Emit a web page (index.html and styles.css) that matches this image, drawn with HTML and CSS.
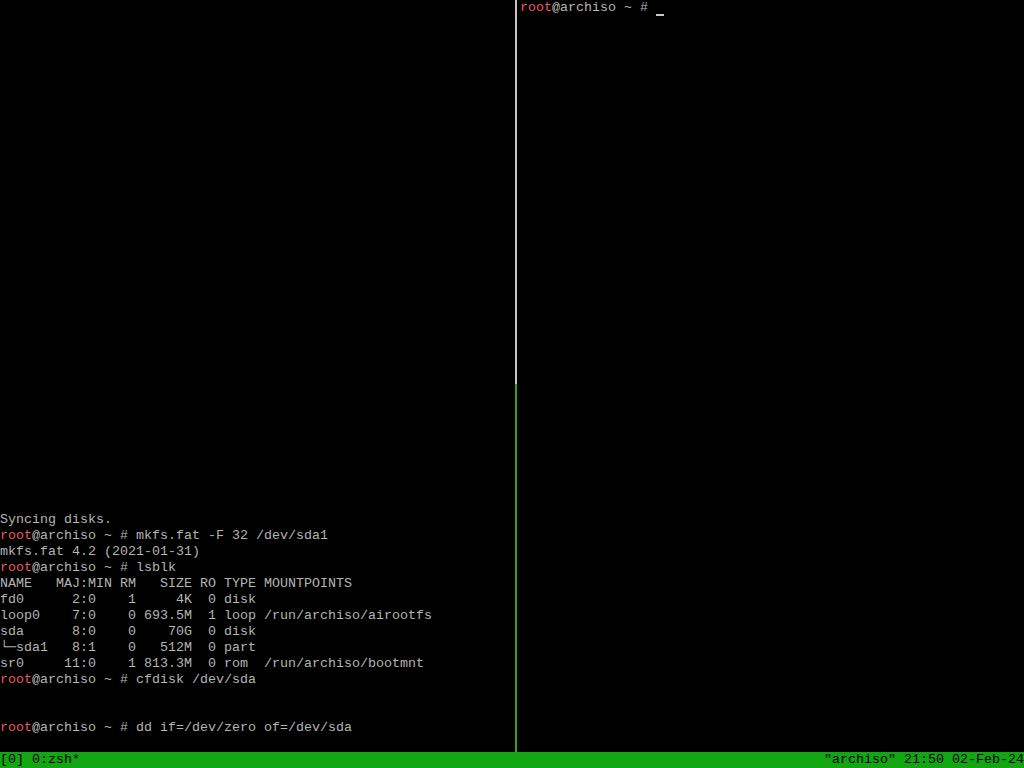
FILE: index.html
```html
<!DOCTYPE html>
<html lang="en">
<head>
    <meta charset="UTF-8">
    <title>tmux - archiso</title>
    <link rel="stylesheet" href="styles.css">
</head>
<body>
<div class="screen">
    <div class="panes">
        <div class="pane pane_left">
            <div class="line">Syncing disks.</div>
            <div class="line"><span class="user">root</span>@archiso ~ # mkfs.fat -F 32 /dev/sda1</div>
            <div class="line">mkfs.fat 4.2 (2021-01-31)</div>
            <div class="line"><span class="user">root</span>@archiso ~ # lsblk</div>
            <div class="line">NAME   MAJ:MIN RM   SIZE RO TYPE MOUNTPOINTS</div>
            <div class="line">fd0      2:0    1     4K  0 disk</div>
            <div class="line">loop0    7:0    0 693.5M  1 loop /run/archiso/airootfs</div>
            <div class="line">sda      8:0    0    70G  0 disk</div>
            <div class="line">└─sda1   8:1    0   512M  0 part</div>
            <div class="line">sr0     11:0    1 813.3M  0 rom  /run/archiso/bootmnt</div>
            <div class="line"><span class="user">root</span>@archiso ~ # cfdisk /dev/sda</div>
            <div class="line"> </div>
            <div class="line"> </div>
            <div class="line"><span class="user">root</span>@archiso ~ # dd if=/dev/zero of=/dev/sda</div>
            <div class="line"> </div>
        </div>
        <div class="divider"><div class="divider_line"></div></div>
        <div class="pane pane_right">
            <div class="line"><span class="user">root</span>@archiso ~ # <span class="cursor"> </span></div>
        </div>
    </div>
    <div class="status">
        <span class="line">[0] 0:zsh*</span>
        <span class="line">"archiso" 21:50 02-Feb-24</span>
    </div>
</div>
</body>
</html>
```

FILE: styles.css
```css
html, body {
    margin: 0;
    padding: 0;
    background: #000000;
}

.screen {
    width: 1024px;
    height: 768px;
    display: flex;
    flex-direction: column;
    background: #000000;
    color: #b4b4b4;
    font-family: "Liberation Mono", "DejaVu Sans Mono", monospace;
    font-size: 13.333px;
    overflow: hidden;
}

.panes {
    height: 752px;
    display: flex;
}

.pane {
    display: flex;
    flex-direction: column;
}

.pane_left {
    width: 512px;
    justify-content: flex-end;
}

.pane_right {
    flex: 1;
}

.line {
    height: 16px;
    line-height: 16px;
    white-space: pre;
}

.user {
    color: #e85a5e;
}

.cursor {
    display: inline-block;
    width: 8px;
    height: 16px;
    vertical-align: top;
    box-sizing: border-box;
    border-bottom: 2px solid #c8c8c8;
    margin-bottom: 0;
}

.divider {
    width: 8px;
}

.divider_line {
    width: 2px;
    height: 100%;
    margin-left: 3px;
    background: linear-gradient(to bottom, #c4c4c4 0, #c4c4c4 384px, #2e9e2e 384px, #2e9e2e 100%);
}

.status {
    height: 16px;
    display: flex;
    justify-content: space-between;
    background: #12a612;
    color: #000000;
}
```
